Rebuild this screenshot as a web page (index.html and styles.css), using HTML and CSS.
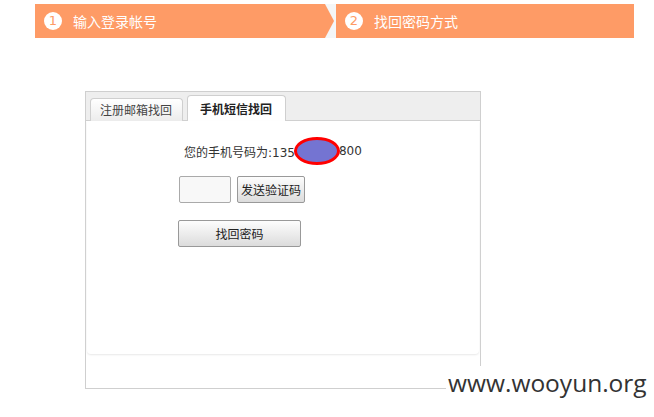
FILE: index.html
```html
<!DOCTYPE html>
<html lang="zh-CN">

<head>
    <meta charset="UTF-8">
    <title>找回密码</title>
    <link rel="stylesheet" href="styles.css">
</head>

<body>
    <div class="steps">
        <div class="step step-first"><span class="num">1</span>输入登录帐号</div>
        <div class="step step-second"><span class="num">2</span>找回密码方式</div>
    </div>
    <div class="box">
        <ul class="tabs">
            <li>注册邮箱找回</li>
            <li class="on">手机短信找回</li>
        </ul>
        <div class="panel">
            <p class="phone">您的手机号码为:135<span class="mask"></span>800</p>
            <div class="row">
                <input class="code" type="text">
                <button class="btn">发送验证码</button>
            </div>
            <button class="btn btn-wide">找回密码</button>
        </div>
    </div>
    <div class="mark">www.wooyun.org</div>
</body>

</html>
```

FILE: styles.css
```css
* {
    margin: 0;
    padding: 0
}

body {
    font-family: "DejaVu Sans", "Noto Sans CJK SC", sans-serif;
    font-size: 12px;
    color: #333;
    background: #fff
}

.steps {
    display: flex;
    margin: 4px 0 0 35px;
    width: 599px;
    height: 34px;
    background: #f4f6f7
}

.step {
    display: flex;
    align-items: center;
    height: 34px;
    background: #fe9b66;
    color: #fff;
    font-size: 14px;
    font-family: "Noto Sans CJK SC", sans-serif
}

.step-first {
    width: 299px;
    padding-left: 9px;
    box-sizing: border-box;
    clip-path: polygon(0 0, 290px 0, 299px 50%, 290px 100%, 0 100%)
}

.step-second {
    width: 298px;
    margin-left: 2px;
    padding-left: 9px;
    box-sizing: border-box
}

.num {
    display: inline-block;
    width: 18px;
    height: 18px;
    line-height: 18px;
    border-radius: 50%;
    background: #fff;
    color: #fe9b66;
    text-align: center;
    font-size: 13px;
    font-family: "DejaVu Sans", sans-serif;
    margin-right: 11px
}

.box {
    margin: 53px 0 0 85px;
    width: 394px;
    height: 296px;
    border: 1px solid #cfcfcf;
    display: flex;
    flex-direction: column
}

.tabs {
    list-style: none;
    display: flex;
    align-items: flex-end;
    gap: 4px;
    height: 28px;
    padding-left: 4px;
    background: #eee;
    border-bottom: 1px solid #cfcfcf
}

.tabs li {
    height: 22px;
    line-height: 22px;
    padding: 0 10px 0 9px;
    margin-bottom: -1px;
    border: 1px solid #cfcfcf;
    border-bottom: none;
    border-radius: 4px 4px 0 0;
    background: linear-gradient(#fff, #ececec);
    color: #444;
    font-family: "Noto Sans CJK SC", sans-serif
}

.tabs li.on {
    height: 25px;
    line-height: 25px;
    padding: 0 13px 0 12px;
    background: #fff;
    font-weight: bold;
    color: #222
}

.panel {
    margin: 0 1px;
    height: 233px;
    border-radius: 0 0 4px 4px;
    box-shadow: 0 1px 2px #e8e8e8;
    padding-left: 90px
}

.phone {
    display: flex;
    align-items: center;
    height: 26px;
    margin: 17px 0 0 7px;
    font-size: 12px
}

.mask {
    width: 40px;
    height: 22px;
    border: 3px solid #f00;
    border-radius: 50%;
    background: #7474d2;
    margin: 0 -1px
}

.row {
    display: flex;
    gap: 6px;
    margin-top: 12px;
    margin-left: 2px
}

.code {
    width: 50px;
    height: 25px;
    border: 1px solid #aaa;
    border-radius: 2px;
    background: #f8f8f8
}

.btn {
    height: 27px;
    padding: 0 3px;
    border: 1px solid #999;
    border-radius: 2px;
    background: linear-gradient(#fdfdfd, #dcdcdc);
    color: #222;
    font-size: 12px;
    font-family: "Noto Sans CJK SC", sans-serif
}

.btn-wide {
    display: block;
    width: 123px;
    margin-top: 17px;
    margin-left: 1px
}

.mark {
    position: absolute;
    left: 446px;
    top: 366px;
    font-size: 24.5px;
    color: #333;
    font-family: "Open Sans", "DejaVu Sans", sans-serif;
    background: #fff;
    padding: 0 2px
}
```
